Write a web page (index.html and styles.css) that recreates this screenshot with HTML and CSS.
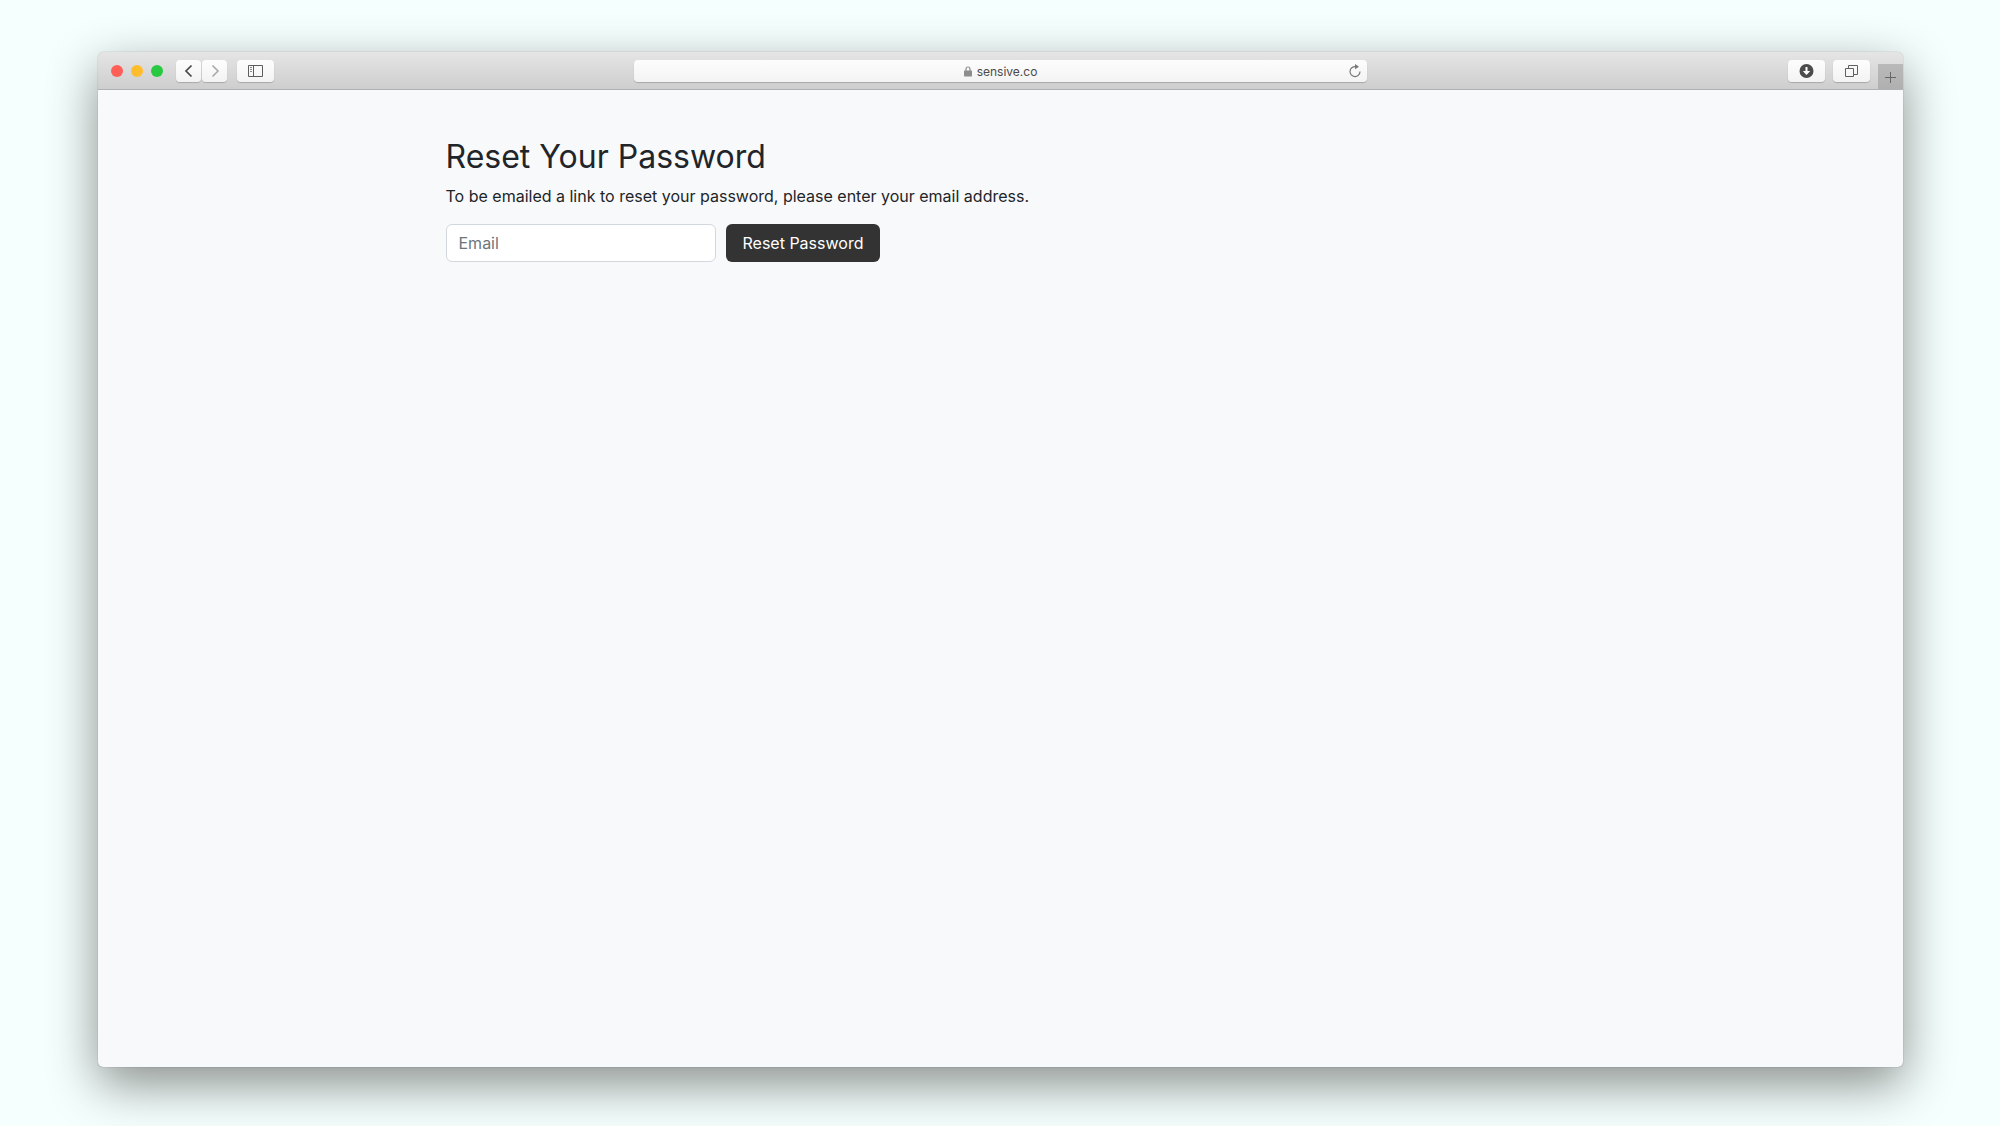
FILE: index.html
```html
<!DOCTYPE html>
<html lang="en">
<head>
<meta charset="utf-8">
<meta name="viewport" content="width=device-width, initial-scale=1">
<title>Reset Your Password</title>
<link rel="stylesheet" href="styles.css">
</head>
<body>
<div class="window">
  <header class="toolbar">
    <div class="group">
      <div class="lights">
        <span class="light light-close"></span>
        <span class="light light-minimize"></span>
        <span class="light light-zoom"></span>
      </div>
      <div class="history">
        <button class="tool tool-narrow" type="button" aria-label="Back">
          <svg width="24" height="22" viewBox="0 0 24 22" fill="none" stroke="#484848" stroke-width="1.7"><path d="M14.500 5.500 9 11 14.500 16.500"/></svg>
        </button>
        <button class="tool tool-narrow" type="button" aria-label="Forward">
          <svg width="24" height="22" viewBox="0 0 24 22" fill="none" stroke="#a6a6a6" stroke-width="1.500"><path d="M9.500 5.500 15 11 9.500 16.500"/></svg>
        </button>
      </div>
      <button class="tool" type="button" aria-label="Sidebar">
        <svg width="37" height="22" viewBox="0 0 37 22" fill="none" stroke="#5c5c5c"><path d="M11.500 5.500h14v11h-14zM16.500 5.500v11"/><path stroke="#8a8a8a" d="M13 7.500h2M13 9.500h2M13 11.500h2"/></svg>
      </button>
    </div>
    <div class="address">
      <span class="site">
        <svg width="8" height="11" viewBox="0 0 8 11"><path d="M2 5V3a2 2 0 0 1 4 0v2" fill="none" stroke="#8c8c8c" stroke-width="1.200"/><rect y="4.500" width="8" height="6" rx="0.700" fill="#8c8c8c"/></svg>
        sensive.co
      </span>
      <button class="reload" type="button" aria-label="Reload">
        <svg width="14" height="14" viewBox="0 0 14 14"><path d="M7.500 2.600A5 5 0 1 0 12 7.600" fill="none" stroke="#777" stroke-width="1.200"/><path d="M7 0l4 2.700-4 2.600z" fill="#777"/></svg>
      </button>
    </div>
    <div class="group group-end">
      <button class="tool" type="button" aria-label="Downloads">
        <svg width="37" height="22" viewBox="0 0 37 22"><circle cx="18.500" cy="11" r="7" fill="#4c4c4c"/><path d="M17.500 7h2v4h2.700l-3.700 4-3.700-4h2.700z" fill="#fff"/></svg>
      </button>
      <button class="tool" type="button" aria-label="Show all tabs">
        <svg width="37" height="22" viewBox="0 0 37 22" fill="none" stroke="#606060"><path d="M12.500 8.500h8v8h-8zM15.500 8V5.500h9v9h-3.500"/></svg>
      </button>
      <button class="new-tab" type="button" aria-label="New tab">
        <svg width="25" height="25" viewBox="0 0 25 25" fill="none" stroke="#666"><path d="M12.500 8v11M7 13.500h11"/></svg>
      </button>
    </div>
  </header>
  <main class="page">
    <h1 class="title">Reset Your Password</h1>
    <p class="lead">To be emailed a link to reset your password, please enter your email address.</p>
    <form class="reset-form">
      <input class="field" type="email" placeholder="Email" aria-label="Email">
      <button class="submit" type="submit">Reset Password</button>
    </form>
  </main>
</div>
</body>
</html>
```
FILE: styles.css
```css
* {
  box-sizing: border-box;
}

body {
  display: flex;
  min-height: 100vh;
  margin: 0;
  padding: 52px 97px 59px 98px;
  background: #f5fffd;
  color: #212529;
  font-family: Inter, sans-serif;
}

button {
  margin: 0;
  padding: 0;
  border: 0;
  font: inherit;
}

svg {
  display: block;
}

.window {
  display: flex;
  flex: 1;
  flex-direction: column;
  min-width: 0;
  background: #f8f9fb;
  border-radius: 6px 6px 5px 5px;
  box-shadow: 0 0 1px rgba(0, 0, 0, 0.5), 0 17px 50px rgba(0, 0, 0, 0.45);
}

.toolbar {
  display: grid;
  grid-template-columns: 1fr minmax(200px, 733px) 1fr;
  align-items: center;
  height: 38px;
  background: linear-gradient(#e5e5e5, #cecece);
  border-bottom: 1px solid #b0b1b3;
  border-radius: 6px 6px 0 0;
}

.group {
  display: flex;
  align-items: center;
  gap: 10px;
  padding-left: 13px;
}

.group-end {
  align-self: stretch;
  justify-content: flex-end;
  gap: 8px;
  padding-left: 0;
}

.lights {
  display: flex;
  gap: 8px;
  margin-right: 3px;
}

.light {
  width: 12px;
  height: 12px;
  border-radius: 50%;
}

.light-close {
  background: #ff5f57;
}

.light-minimize {
  background: #ffbd2e;
}

.light-zoom {
  background: #28c940;
}

.history {
  display: flex;
  gap: 1px;
}

.tool,
.address {
  height: 22px;
  background: linear-gradient(#fdfdfd, #f3f3f3);
  border-radius: 4px;
  box-shadow: 0 1px 1px rgba(0, 0, 0, 0.2);
}

.tool {
  display: grid;
  place-items: center;
  width: 37px;
}

.tool-narrow {
  width: 25px;
}

.address {
  display: grid;
  grid-template-columns: 1fr auto 1fr;
  align-items: center;
  padding: 0 5px;
}

.site {
  display: flex;
  grid-column: 2;
  align-items: center;
  gap: 5px;
  padding-top: 2px;
  color: #4a4a4a;
  font-size: 12px;
  line-height: 16px;
}

.reload {
  justify-self: end;
  background: none;
}

.new-tab {
  align-self: flex-end;
  background: linear-gradient(#b9b9b9, #b0b0b0);
}

.page {
  width: 100%;
  max-width: 1140px;
  margin: 0 auto;
  padding: 48px 15px;
}

.title {
  margin: 0 0 8px;
  font-size: 32px;
  font-weight: 400;
  line-height: 38px;
}

.lead {
  margin: 0 0 16px;
  font-size: 16px;
  line-height: 24px;
}

.reset-form {
  display: flex;
  gap: 10px;
}

.field,
.submit {
  height: 38px;
  border-radius: 6px;
  font: 400 16px/24px Inter, sans-serif;
}

.field {
  width: 270px;
  min-width: 0;
  padding: 6px 12px;
  background: #fff;
  border: 1px solid #d3d8df;
  color: #212529;
}

.field::placeholder {
  color: #6c757d;
  opacity: 1;
}

.submit {
  padding: 0 17px;
  background: #333;
  color: #fff;
}
```
